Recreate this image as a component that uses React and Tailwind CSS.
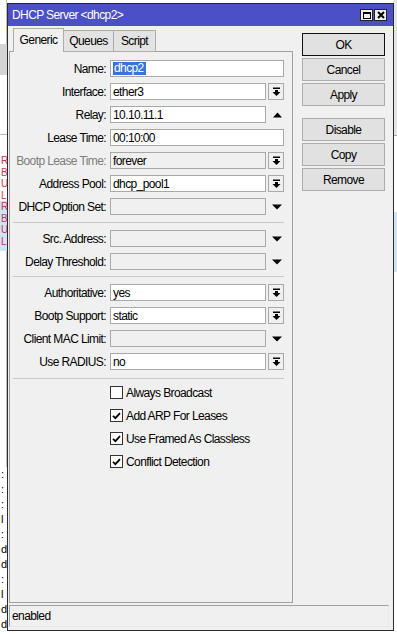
import React from "react";

const FONT = "font-['Liberation_Sans',Arial,sans-serif]";

function DropIcon() {
  return (
    <svg width="9" height="10" viewBox="0 0 9 10" fill="#000">
      <rect x="1" y="0.5" width="7" height="1.5" />
      <rect x="3" y="3" width="3" height="2" />
      <path d="M0.5 5 H8.5 L4.5 9 Z" />
    </svg>
  );
}

function DownTri() {
  return (
    <svg width="10" height="6" viewBox="0 0 10 6" fill="#000">
      <path d="M0 0.5 H10 L5 5.5 Z" />
    </svg>
  );
}

function UpTri() {
  return (
    <svg width="9" height="6" viewBox="0 0 9 6" fill="#000">
      <path d="M0 5.5 H9 L4.5 0.5 Z" />
    </svg>
  );
}

function Field({ label, value = "", kind = "none", disabled = false, labelGray = false, selected = false }) {
  return (
    <div className="flex items-center h-[17px]">
      <div className={`w-[93px] flex justify-end whitespace-nowrap ${labelGray ? "text-[#7d7d7d]" : "text-black"}`}>
        <span>{label}:</span>
      </div>
      <div className="ml-[4px] flex-1 flex items-center gap-[2px] h-full">
        <div
          className={`flex-1 h-full border border-[#a9a9a9] ${disabled ? "bg-[#f0f0f0]" : "bg-white"} flex items-center pl-[2px] overflow-hidden whitespace-nowrap`}
        >
          {selected ? <span className="bg-[#3875d7] text-white pl-[1px] pr-[2px] leading-[13px]">{value}</span> : value}
        </div>
        {kind === "btn" && (
          <div className="w-[16px] h-full border border-[#a9a9a9] bg-[#f0f0f0] flex items-center justify-center">
            <DropIcon />
          </div>
        )}
        {kind === "down" && (
          <div className="w-[16px] h-full flex items-center justify-center pl-[2px]">
            <DownTri />
          </div>
        )}
        {kind === "up" && (
          <div className="w-[16px] h-full flex items-center justify-center pl-[2px]">
            <UpTri />
          </div>
        )}
      </div>
    </div>
  );
}

function Check({ checked, label }) {
  return (
    <div className="flex items-center h-[17px] pl-[97px]">
      <div className="w-[13px] h-[13px] border border-[#333333] bg-white flex items-center justify-center">
        {checked && (
          <svg width="9" height="8" viewBox="0 0 9 8">
            <path d="M1 3.8 L3.4 6.2 L8 1.2" stroke="#000" strokeWidth="1.8" fill="none" />
          </svg>
        )}
      </div>
      <span className="ml-[3px] whitespace-nowrap">{label}</span>
    </div>
  );
}

function Btn({ children, def = false }) {
  return (
    <div
      className={`w-[83px] h-[23px] border ${def ? "border-[#111111]" : "border-[#adadad]"} bg-[#e1e1e1] flex items-center justify-center`}
    >
      {children}
    </div>
  );
}

function Sep({ mt, mb }) {
  return <div className={`border-t border-[#c8c8c8] ${mt} ${mb}`} />;
}

export default function App() {
  const leftLetters1 = ["R", "B", "U", "L"];
  const leftLetters2 = ["R", "B", "U", "L"];
  const bottomLetters = [":", ":", ":", "l", ":", "d", "d", ":", "l", "d", "d"];
  return (
    <div className={`relative w-[397px] h-[634px] overflow-hidden bg-white text-[12px] tracking-[-0.6px] leading-[14px] text-black ${FONT}`}>
      {/* background application */}
      <div className="flex h-full">
        <div className="w-[7px] flex flex-col overflow-hidden text-[10px] leading-[11px] tracking-normal">
          <div className="h-[44px] border-r border-[#c0c0c0]" />
          <div className="h-[31px] bg-[#d4d4d4]" />
          <div className="h-[60px] border-b border-[#bbbbbb]" />
          <div className="h-[20px]" />
          <div className="flex flex-col text-[#d0335a]">
            {leftLetters1.map((l, i) => (
              <div key={i} className="h-[11.5px] pl-[1px]">{l}</div>
            ))}
          </div>
          <div className="flex flex-col text-[#d0335a] bg-[#cfe3f6] pb-[4px]">
            {leftLetters2.map((l, i) => (
              <div key={i} className="h-[11.5px] pl-[1px]">{l}</div>
            ))}
          </div>
          <div className="h-[216px] border-r border-[#c0c0c0]" />
          <div className="flex flex-col">
            {bottomLetters.map((l, i) => (
              <div key={i} className="h-[15px] pl-[1px] text-[11px] leading-[15px]">{l}</div>
            ))}
          </div>
        </div>
        <div className="flex-1" />
        <div className="w-[4px] flex flex-col">
          <div className="h-[136px] bg-[#e6e6e6] border-b border-[#aaaaaa]" />
          <div className="h-[76px]" />
          <div className="h-[60px] bg-[#cfe3f6]" />
        </div>
      </div>

      {/* dialog window */}
      <div className="absolute left-[7px] top-[3px] w-[387px] h-[628px] border border-[#2b2b2b] bg-[#f0f0f0] flex flex-col">
        {/* title bar */}
        <div className="h-[22px] bg-[#4c50c6] flex items-center pl-[4px] pr-[6px]">
          <span className="text-white flex-1 whitespace-nowrap">{"DHCP Server <dhcp2>"}</span>
          <div className="flex gap-[1px]">
            <div className="w-[13px] h-[12px] bg-[#f0f0f0] border border-[#222222] flex items-center justify-center">
              <div className="w-[8px] h-[7px] border border-black border-t-2" />
            </div>
            <div className="w-[13px] h-[12px] bg-[#f0f0f0] border border-[#222222] flex items-center justify-center">
              <svg width="8" height="8" viewBox="0 0 8 8">
                <path d="M1 1 L7 7 M7 1 L1 7" stroke="#000" strokeWidth="2" />
              </svg>
            </div>
          </div>
        </div>

        {/* body */}
        <div className="flex">
          <div className="ml-[1px] w-[284px] flex flex-col">
            {/* tabs */}
            <div className="mt-[2px] h-[24px] flex items-end pl-[4px] relative z-10 -mb-[1px]">
              <div className="h-[24px] w-[51px] border border-b-0 border-[#adadad] bg-[#f0f0f0] flex items-center justify-center pb-[1px]">
                Generic
              </div>
              <div className="h-[22px] w-[50px] border border-l-0 border-[#adadad] bg-[#e3e3e3] flex items-center justify-center">
                Queues
              </div>
              <div className="h-[22px] w-[42px] border border-l-0 border-[#adadad] bg-[#e3e3e3] flex items-center justify-center">
                Script
              </div>
            </div>
            {/* panel */}
            <div className="h-[552px] border border-[#a0a0a0] bg-[#f0f0f0] pl-[3px] pr-[8px] pt-[8px] flex flex-col">
              <div className="flex flex-col gap-[6px]">
                <Field label="Name" value="dhcp2" selected />
                <Field label="Interface" value="ether3" kind="btn" />
                <Field label="Relay" value="10.10.11.1" kind="up" />
                <Field label="Lease Time" value="00:10:00" />
                <Field label="Bootp Lease Time" value="forever" kind="btn" disabled labelGray />
                <Field label="Address Pool" value="dhcp_pool1" kind="btn" />
                <Field label="DHCP Option Set" kind="down" disabled />
              </div>
              <Sep mt="mt-[7px]" mb="mb-[7px]" />
              <div className="flex flex-col gap-[6px]">
                <Field label="Src. Address" kind="down" disabled />
                <Field label="Delay Threshold" kind="down" disabled />
              </div>
              <Sep mt="mt-[6px]" mb="mb-[7px]" />
              <div className="flex flex-col gap-[6px]">
                <Field label="Authoritative" value="yes" kind="btn" />
                <Field label="Bootp Support" value="static" kind="btn" />
                <Field label="Client MAC Limit" kind="down" disabled />
                <Field label="Use RADIUS" value="no" kind="btn" />
              </div>
              <Sep mt="mt-[8px]" mb="mb-[5px]" />
              <div className="flex flex-col gap-[6px]">
                <Check label="Always Broadcast" />
                <Check checked label="Add ARP For Leases" />
                <Check checked label="Use Framed As Classless" />
                <Check checked label="Conflict Detection" />
              </div>
            </div>
          </div>
          {/* right buttons */}
          <div className="ml-[9px] mt-[7px] flex flex-col gap-[2px]">
            <Btn def>OK</Btn>
            <Btn>Cancel</Btn>
            <Btn>Apply</Btn>
            <div className="h-[8px]" />
            <Btn>Disable</Btn>
            <Btn>Copy</Btn>
            <Btn>Remove</Btn>
          </div>
        </div>

        {/* status bar */}
        <div className="mt-[2px] ml-[1px] mr-[4px] h-[22px] border border-[#a0a0a0] border-r-[#e8e8e8] border-b-[#e8e8e8] flex items-center pl-[2px]">
          enabled
        </div>
      </div>
    </div>
  );
}
